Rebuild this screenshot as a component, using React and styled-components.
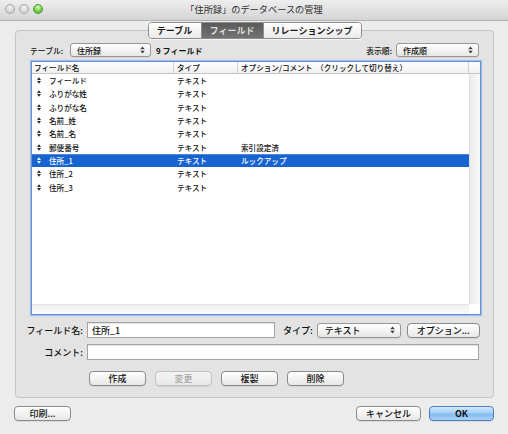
import React from "react";
import styled, { createGlobalStyle } from "styled-components";

const GlobalStyle = createGlobalStyle`
  html, body {
    margin: 0;
    padding: 0;
    background: #ececec;
  }
  body {
    font-family: "Noto Sans CJK JP", "Liberation Sans", sans-serif;
    font-weight: 500;
    color: #111111;
  }
  * {
    box-sizing: border-box;
  }
`;

const Window = styled.div`
  width: 508px;
  height: 434px;
  background: #ececec;
  display: flex;
  flex-direction: column;
  overflow: hidden;
`;

const TitleBar = styled.div`
  height: 21px;
  flex: none;
  display: grid;
  grid-template-columns: 1fr auto 1fr;
  align-items: center;
  background: linear-gradient(#eeeeee, #d4d4d4);
  border-bottom: 1px solid #b1b1b1;
`;

const Lights = styled.div`
  display: flex;
  gap: 4px;
  padding-left: 5px;
  margin-top: -3px;
`;

const Light = styled.span`
  width: 10px;
  height: 10px;
  border-radius: 50%;
  border: 1px solid ${(p) => (p.$on ? "#4f9a34" : "#a8a8a8")};
  background: ${(p) =>
    p.$on
      ? "radial-gradient(circle at 50% 30%, #d8ffb8, #6cc841 60%, #4fae2c)"
      : "radial-gradient(circle at 50% 30%, #f2f2f2, #d2d2d2 70%, #c4c4c4)"};
`;

const Title = styled.div`
  font-size: 9.2px;
  font-weight: normal;
  color: #2e2e2e;
  margin-top: -2px;
`;

const Body = styled.div`
  flex: 1;
  display: flex;
  flex-direction: column;
  padding: 1px 14px 0 14px;
`;

const TabBar = styled.div`
  align-self: center;
  display: flex;
  height: 17px;
  border: 1px solid #8e8e8e;
  border-radius: 4px;
  overflow: hidden;
  position: relative;
  z-index: 1;
  margin-left: 1px;
  box-shadow: 0 1px 0 rgba(255, 255, 255, 0.6);
`;

const Tab = styled.div`
  width: ${(p) => p.$w}px;
  display: flex;
  align-items: center;
  justify-content: center;
  font-size: 9px;
  font-weight: bold;
  color: ${(p) => (p.$active ? "#dcdcdc" : "#1a1a1a")};
  background: ${(p) =>
    p.$active
      ? "linear-gradient(#5a5a5a, #737373)"
      : "linear-gradient(#ffffff, #e9e9e9)"};
  & + & {
    border-left: 1px solid #8e8e8e;
  }
`;

const GroupBox = styled.div`
  margin: -9px 0 0 1px;
  border: 1px solid #c4c4c4;
  border-radius: 4px;
  background: #e3e3e3;
  padding: 12px 12px 11px 14px;
  display: flex;
  flex-direction: column;
`;

const TopRow = styled.div`
  height: 14px;
  display: flex;
  align-items: center;
  margin-right: 2px;
`;

const SmallLabel = styled.span`
  font-size: 7.8px;
  margin-right: ${(p) => p.$gap || 4}px;
  white-space: nowrap;
`;

const Count = styled.span`
  font-size: 8px;
  font-weight: bold;
  margin-left: 5px;
  flex: 1;
`;

const PopUp = styled.div`
  width: ${(p) => p.$w}px;
  height: ${(p) => p.$h || 14}px;
  display: flex;
  align-items: center;
  justify-content: space-between;
  padding: 0 5px 0 ${(p) => p.$pad || 6}px;
  border: 1px solid #969696;
  border-radius: 3px;
  background: linear-gradient(#ffffff, #f1f1f1 60%, #e6e6e6);
  box-shadow: 0 1px 0 rgba(0, 0, 0, 0.06);
  font-size: ${(p) => p.$fs || 8}px;
  white-space: nowrap;
`;

const Arrows = () => (
  <svg width="5" height="8" viewBox="0 0 5 8">
    <polygon points="0.3,3.2 2.5,0.6 4.7,3.2" fill="#3a3a3a" />
    <polygon points="0.3,4.8 2.5,7.4 4.7,4.8" fill="#3a3a3a" />
  </svg>
);

const ListBox = styled.div`
  margin: 4px 0 0 1px;
  height: 254px;
  border: 1px solid #5e93da;
  box-shadow: 0 0 1px 1px rgba(110, 160, 225, 0.55);
  background: #ffffff;
  display: grid;
  grid-template-columns: 1fr 11px;
  grid-template-rows: 12px 1fr 10px;
`;

const HeaderRow = styled.div`
  display: flex;
  background: linear-gradient(#ffffff, #f0f0f0);
  border-bottom: 1px solid #c6c6c6;
`;

const HeaderCell = styled.div`
  width: ${(p) => (p.$w ? `${p.$w}px` : "auto")};
  flex: ${(p) => (p.$w ? "none" : "1")};
  padding-left: ${(p) => p.$pad}px;
  font-size: 7.6px;
  line-height: 11px;
  white-space: nowrap;
  border-right: 1px solid #cfcfcf;
`;

const HeaderCorner = styled.div`
  background: linear-gradient(#ffffff, #f0f0f0);
  border-bottom: 1px solid #c6c6c6;
`;

const Rows = styled.div`
  display: flex;
  flex-direction: column;
  overflow: hidden;
`;

const Row = styled.div`
  height: 13.3px;
  flex: none;
  display: flex;
  align-items: center;
  background: ${(p) => (p.$selected ? "#1763d0" : "transparent")};
  color: ${(p) => (p.$selected ? "#ffffff" : "#111111")};
  box-shadow: ${(p) => (p.$selected ? "inset 0 1px 0 #4a86dc" : "none")};
`;

const Cell = styled.div`
  width: ${(p) => (p.$w ? `${p.$w}px` : "auto")};
  flex: ${(p) => (p.$w ? "none" : "1")};
  display: flex;
  align-items: center;
  gap: 8px;
  padding-left: ${(p) => p.$pad}px;
  font-size: 7.6px;
  white-space: nowrap;
`;

const Handle = ({ color }) => (
  <svg width="4" height="7" viewBox="0 0 4 7">
    <polygon points="0,3 2,0.2 4,3" fill={color} />
    <polygon points="0,4 2,6.8 4,4" fill={color} />
  </svg>
);

const VScroll = styled.div`
  background: linear-gradient(to right, #ebebeb, #f9f9f9);
  border-left: 1px solid #e0e0e0;
`;

const HScroll = styled.div`
  background: linear-gradient(#f1f1f1, #fafafa);
  border-top: 1px solid #e4e4e4;
`;

const ScrollCorner = styled.div`
  background: #ffffff;
`;

const FormRow = styled.div`
  display: flex;
  align-items: center;
  height: 16px;
  margin-top: ${(p) => p.$top}px;
`;

const FormLabel = styled.span`
  width: 59px;
  margin-left: -6px;
  text-align: right;
  font-size: 9px;
  white-space: nowrap;
`;

const TextInput = styled.div`
  width: ${(p) => p.$w}px;
  height: 16px;
  margin-left: 4px;
  padding-left: 4px;
  display: flex;
  align-items: center;
  font-size: 9px;
  background: #ffffff;
  border: 1px solid #a2a2a2;
  box-shadow: inset 0 1px 1px rgba(0, 0, 0, 0.12);
`;

const InlineLabel = styled.span`
  font-size: 9px;
  margin: 0 4px 0 8px;
  white-space: nowrap;
`;

const PushButton = styled.div`
  width: ${(p) => p.$w}px;
  height: 15px;
  flex: none;
  display: flex;
  align-items: center;
  justify-content: center;
  border-radius: 4px;
  font-size: 9px;
  font-weight: ${(p) => (p.$default ? "bold" : 500)};
  white-space: nowrap;
  color: ${(p) => (p.$disabled ? "#a8a8a8" : "#111111")};
  border: 1px solid
    ${(p) => (p.$default ? "#4d7ec3" : p.$disabled ? "#c0c0c0" : "#8a8a8a")};
  background: ${(p) =>
    p.$default
      ? "linear-gradient(#d3e9fd, #a5cff7 45%, #82baf1 55%, #a9d5fa)"
      : p.$disabled
      ? "linear-gradient(#f4f4f4, #e8e8e8)"
      : "linear-gradient(#ffffff, #f2f2f2 55%, #e7e7e7)"};
  box-shadow: 0 1px 0 rgba(0, 0, 0, 0.07);
  margin-left: ${(p) => p.$ml || 0}px;
`;

const ActionRow = styled.div`
  display: flex;
  gap: 9px;
  margin: 11px 0 0 59px;
`;

const Footer = styled.div`
  display: flex;
  align-items: center;
  margin-top: 8px;
  gap: 8px;
`;

const Spacer = styled.div`
  flex: 1;
`;

const fields = [
  { name: "フィールド", type: "テキスト", opt: "" },
  { name: "ふりがな姓", type: "テキスト", opt: "" },
  { name: "ふりがな名", type: "テキスト", opt: "" },
  { name: "名前_姓", type: "テキスト", opt: "" },
  { name: "名前_名", type: "テキスト", opt: "" },
  { name: "郵便番号", type: "テキスト", opt: "索引設定済" },
  { name: "住所_1", type: "テキスト", opt: "ルックアップ", selected: true },
  { name: "住所_2", type: "テキスト", opt: "" },
  { name: "住所_3", type: "テキスト", opt: "" },
];

export default function App() {
  return (
    <>
      <GlobalStyle />
      <Window>
        <TitleBar>
          <Lights>
            <Light />
            <Light />
            <Light $on />
          </Lights>
          <Title>「住所録」のデータベースの管理</Title>
          <div />
        </TitleBar>

        <Body>
          <TabBar>
            <Tab $w={52}>テーブル</Tab>
            <Tab $w={62} $active>
              フィールド
            </Tab>
            <Tab $w={98}>リレーションシップ</Tab>
          </TabBar>

          <GroupBox>
            <TopRow>
              <SmallLabel $gap={7}>テーブル:</SmallLabel>
              <PopUp $w={81}>
                <span>住所録</span>
                <Arrows />
              </PopUp>
              <Count>9 フィールド</Count>
              <SmallLabel>表示順:</SmallLabel>
              <PopUp $w={83}>
                <span>作成順</span>
                <Arrows />
              </PopUp>
            </TopRow>

            <ListBox>
              <HeaderRow>
                <HeaderCell $w={142} $pad={2}>
                  フィールド名
                </HeaderCell>
                <HeaderCell $w={64} $pad={3}>
                  タイプ
                </HeaderCell>
                <HeaderCell $pad={3}>
                  オプション/コメント　（クリックして切り替え）
                </HeaderCell>
              </HeaderRow>
              <HeaderCorner />
              <Rows>
                {fields.map((f) => (
                  <Row key={f.name} $selected={f.selected}>
                    <Cell $w={142} $pad={5}>
                      <Handle color={f.selected ? "#ffffff" : "#2a2a2a"} />
                      {f.name}
                    </Cell>
                    <Cell $w={64} $pad={3}>
                      {f.type}
                    </Cell>
                    <Cell $pad={3}>{f.opt}</Cell>
                  </Row>
                ))}
              </Rows>
              <VScroll />
              <HScroll />
              <ScrollCorner />
            </ListBox>

            <FormRow $top={7}>
              <FormLabel>フィールド名:</FormLabel>
              <TextInput $w={188}>住所_1</TextInput>
              <InlineLabel>タイプ:</InlineLabel>
              <PopUp $w={84} $h={15} $fs={9} $pad={7}>
                <span>テキスト</span>
                <Arrows />
              </PopUp>
              <PushButton $w={73} $ml={6}>
                オプション...
              </PushButton>
            </FormRow>

            <FormRow $top={6}>
              <FormLabel>コメント:</FormLabel>
              <TextInput $w={392} />
            </FormRow>

            <ActionRow>
              <PushButton $w={57}>作成</PushButton>
              <PushButton $w={57} $disabled>
                変更
              </PushButton>
              <PushButton $w={57}>複製</PushButton>
              <PushButton $w={57}>削除</PushButton>
            </ActionRow>
          </GroupBox>

          <Footer>
            <PushButton $w={57}>印刷...</PushButton>
            <Spacer />
            <PushButton $w={65}>キャンセル</PushButton>
            <PushButton $w={65} $default>
              OK
            </PushButton>
          </Footer>
        </Body>
      </Window>
    </>
  );
}
